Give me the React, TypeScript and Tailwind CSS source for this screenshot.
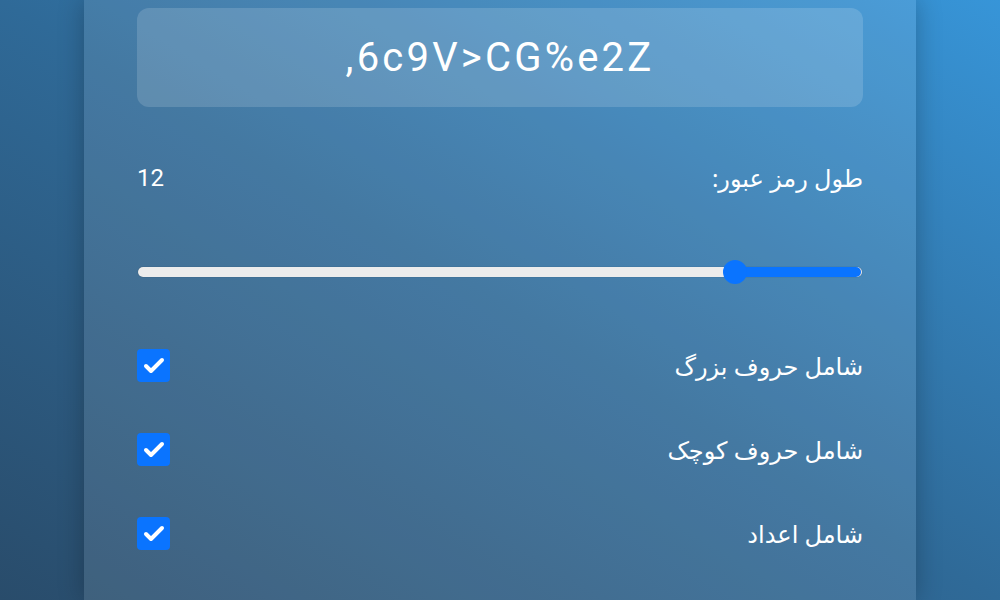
import { Check } from 'lucide-react';

const OPTIONS = ['شامل حروف بزرگ', 'شامل حروف کوچک', 'شامل اعداد'];

function Checkbox() {
  return (
    <span className="flex h-[33px] w-[33px] items-center justify-center rounded-[4px] bg-[#0a74ff]">
      <Check className="h-[24px] w-[24px] text-white" strokeWidth={4} />
    </span>
  );
}

export default function App() {
  // filled share of the track, right side (rtl)
  const percent = 17.6;

  return (
    <div className="h-[600px] w-[1000px] overflow-hidden bg-gradient-to-tr from-[#294c6b] via-[#2f6a98] to-[#3795d8]">
      <div
        dir="rtl"
        className="mx-[84px] h-full bg-white/10 px-[53px] pt-[8px] shadow-[0_0_24px_rgba(0,0,0,0.25)] font-['Noto_Sans','DejaVu_Sans',sans-serif] text-white"
      >
        <div className="flex h-[99px] items-center justify-center rounded-[12px] bg-white/15">
          <span dir="ltr" className="font-['Roboto',sans-serif] text-[40px] tracking-[0.08em]">
            ,6c9V&gt;CG%e2Z
          </span>
        </div>

        <div className="mt-[53px] flex items-center justify-between text-[24px]">
          <span>طول رمز عبور:</span>
          <span className="font-['Roboto',sans-serif] text-[24px]">12</span>
        </div>

        <div className="relative mt-[64px] h-[24px]">
          <div className="absolute inset-x-[1px] top-[7px] h-[10px] rounded-full bg-[#ececec] shadow-[0_0_1px_rgba(0,0,0,0.4)]" />
          <div
            className="absolute right-[2px] top-[7px] h-[10px] rounded-full bg-[#0a74ff]"
            style={{ width: `${percent}%` }}
          />
          <div
            className="absolute top-[0px] h-[24px] w-[24px] rounded-full bg-[#0a74ff]"
            style={{ right: `calc(${percent}% - 12px)` }}
          />
        </div>

        <div className="mt-[65px] flex flex-col gap-[51px]">
          {OPTIONS.map((label) => (
            <label key={label} className="flex h-[33px] items-center justify-between text-[24px]">
              <span>{label}</span>
              <Checkbox />
            </label>
          ))}
        </div>
      </div>
    </div>
  );
}
